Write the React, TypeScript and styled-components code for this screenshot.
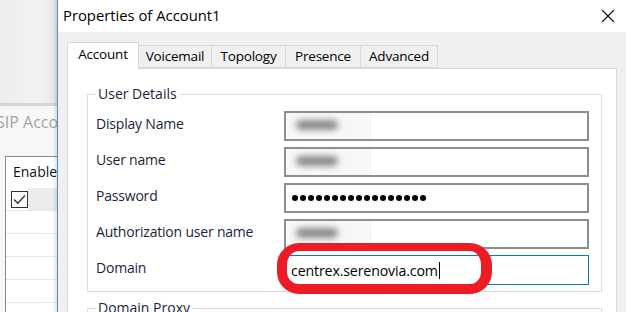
import React from 'react'
import styled, { createGlobalStyle } from 'styled-components'

const GlobalStyle = createGlobalStyle`
    html, body {
        margin: 0;
        padding: 0;
        width: 626px;
        height: 312px;
        overflow: hidden;
        background: #f0f0f0;
    }
    body {
        font-family: "Open Sans", "Noto Sans", "Liberation Sans", sans-serif;
        color: #000;
    }
`

const Screen = styled.div`
    display: flex;
    width: 626px;
    height: 312px;
    overflow: hidden;
`

/* window behind the dialog */
const BackWindow = styled.div`
    width: 57px;
    flex-shrink: 0;
    display: flex;
    flex-direction: column;
    background: #f7f7f7;
    overflow: hidden;
`

const BackHeader = styled.div`
    height: 103px;
    flex-shrink: 0;
    background: linear-gradient(to right, #ededed 0%, #f3f3f3 70%, #e4e4e4 100%);
    border-bottom: 3px solid #d6d6d6;
`

const BackTitle = styled.div`
    margin: 5px 0 0 -4px;
    height: 28px;
    font-size: 16px;
    color: #a3a3a3;
    white-space: nowrap;
`

const BackTable = styled.div`
    margin: 17px 0 0 5px;
    flex: 1;
    background: #fff;
    border: 1px solid #8a8a8a;
    border-right: none;
    border-bottom: none;
`

const BackHead = styled.div`
    height: 31px;
    padding: 5px 0 0 7px;
    box-sizing: border-box;
    font-size: 14px;
    color: #111;
    white-space: nowrap;
`

const BackRow = styled.div<{ $selected?: boolean }>`
    height: 22px;
    display: flex;
    align-items: center;
    border-bottom: 1px solid #e6e6e6;
    background: ${p => (p.$selected ? 'linear-gradient(to right, #fff 0 22px, #ececec 22px)' : '#fff')};
`

const CheckBox = styled.span`
    width: 17px;
    height: 17px;
    margin-left: 5px;
    box-sizing: border-box;
    border: 1.5px solid #333;
    display: flex;
    align-items: center;
    justify-content: center;
    background: #fff;
`

/* the dialog */
const Dialog = styled.div`
    flex: 1;
    display: flex;
    flex-direction: column;
    border-left: 1px solid #4a90d9;
    background: #f0f0f0;
    box-shadow: -2px 0 3px rgba(0, 0, 0, 0.12);
`

const TitleBar = styled.div`
    height: 32px;
    flex-shrink: 0;
    display: flex;
    align-items: center;
    justify-content: space-between;
    padding: 0 11px 0 5px;
    background: #fff;
`

const Title = styled.div`
    font-size: 14.8px;
    color: #000;
    margin-top: -2px;
`

const Body = styled.div`
    flex: 1;
    display: flex;
    flex-direction: column;
    padding: 10px 9px 0 9px;
`

const TabRow = styled.div`
    display: flex;
    align-items: flex-end;
    height: 26px;
    flex-shrink: 0;
`

const Tab = styled.div<{ $active?: boolean; $w: number }>`
    position: relative;
    box-sizing: border-box;
    width: ${p => p.$w}px;
    height: ${p => (p.$active ? 27 : 23)}px;
    margin-bottom: ${p => (p.$active ? -1 : 0)}px;
    margin-left: ${p => (p.$active ? 0 : -1)}px;
    z-index: ${p => (p.$active ? 1 : 0)};
    display: flex;
    align-items: center;
    justify-content: center;
    padding-bottom: ${p => (p.$active ? 4 : 1)}px;
    font-size: 13.5px;
    letter-spacing: -0.2px;
    background: ${p => (p.$active ? '#fff' : '#f0f0f0')};
    border: 1px solid #d9d9d9;
    border-bottom: ${p => (p.$active ? 'none' : '1px solid #d9d9d9')};
`

const Panel = styled.div`
    flex: 1;
    background: #fff;
    border: 1px solid #d9d9d9;
    padding: 16px 14px 0 19px;
    display: flex;
    flex-direction: column;
`

const Group = styled.fieldset<{ $gap?: number }>`
    margin: ${p => p.$gap ?? 0}px 0 0 0;
    padding: 0 12px 6px 8px;
    border: 1px solid #dcdcdc;
    min-width: 0;
`

const Legend = styled.legend`
    padding: 0 2px;
    font-size: 14px;
    line-height: 18px;
    color: #1a1f3a;
`

const Rows = styled.div`
    display: grid;
    grid-template-columns: 188px 1fr;
    row-gap: 6px;
    margin-top: 8px;
`

const Label = styled.div`
    font-size: 14px;
    letter-spacing: -0.2px;
    color: #1a1f3a;
    display: flex;
    align-items: center;
    padding-bottom: 6px;
`

const FieldWrap = styled.div`
    position: relative;
`

const Field = styled.div<{ $focused?: boolean }>`
    height: 30px;
    box-sizing: border-box;
    display: flex;
    align-items: center;
    background: #fff;
    border: ${p => (p.$focused ? '1px solid #0078d7' : '2px solid #8e8e8e')};
    padding-left: ${p => (p.$focused ? 6 : 1)}px;
`

const Patch = styled.span`
    width: 85px;
    height: 100%;
    display: flex;
    align-items: center;
    background: #f7f7f7;
`

const Smudge = styled.span`
    width: 42px;
    height: 10px;
    margin: 0 0 3px 9px;
    border-radius: 6px;
    background: #8a8a8a;
    filter: blur(3px);
`

const Dots = styled.span`
    display: flex;
    gap: 2px;
    margin-left: 5px;
`

const Dot = styled.span`
    width: 6px;
    height: 6px;
    border-radius: 50%;
    background: #000;
`

const Value = styled.span`
    font-size: 14.2px;
    color: #000;
    letter-spacing: -0.15px;
`

const Caret = styled.span`
    width: 1.5px;
    height: 17px;
    margin-left: 1px;
    background: #000;
`

const Annotation = styled.div`
    position: absolute;
    left: -7px;
    top: -12px;
    width: 215px;
    height: 51px;
    box-sizing: border-box;
    border: solid #ed1c24;
    border-width: 8px 11px 10px 10px;
    border-radius: 22px;
    pointer-events: none;
`

const tabs = [
    { label: 'Account', w: 72 },
    { label: 'Voicemail', w: 74 },
    { label: 'Topology', w: 75 },
    { label: 'Presence', w: 76 },
    { label: 'Advanced', w: 78 },
]

const Redacted = () => (
    <Patch>
        <Smudge />
    </Patch>
)

const App: React.FC = () => {
    return (
        <>
            <GlobalStyle />
            <Screen>
                <BackWindow>
                    <BackHeader />
                    <BackTitle>SIP Accounts</BackTitle>
                    <BackTable>
                        <BackHead>Enabled</BackHead>
                        <BackRow $selected>
                            <CheckBox>
                                <svg width="13" height="11" viewBox="0 0 13 11">
                                    <path d="M1 5.5 L4.8 9.2 L12 1.5" fill="none" stroke="#333" strokeWidth="1.3" />
                                </svg>
                            </CheckBox>
                        </BackRow>
                        <BackRow />
                        <BackRow />
                        <BackRow />
                        <BackRow />
                    </BackTable>
                </BackWindow>

                <Dialog>
                    <TitleBar>
                        <Title>Properties of Account1</Title>
                        <svg width="14" height="14" viewBox="0 0 14 14">
                            <path d="M1 1 L13 13 M13 1 L1 13" stroke="#111" strokeWidth="1.2" />
                        </svg>
                    </TitleBar>
                    <Body>
                        <TabRow>
                            {tabs.map((t, i) => (
                                <Tab key={t.label} $w={t.w} $active={i === 0}>
                                    {t.label}
                                </Tab>
                            ))}
                        </TabRow>
                        <Panel>
                            <Group>
                                <Legend>User Details</Legend>
                                <Rows>
                                    <Label>Display Name</Label>
                                    <Field><Redacted /></Field>
                                    <Label>User name</Label>
                                    <Field><Redacted /></Field>
                                    <Label>Password</Label>
                                    <Field>
                                        <Dots>
                                            {Array.from({ length: 17 }).map((_, i) => <Dot key={i} />)}
                                        </Dots>
                                    </Field>
                                    <Label>Authorization user name</Label>
                                    <Field><Redacted /></Field>
                                    <Label>Domain</Label>
                                    <FieldWrap>
                                        <Field $focused>
                                            <Value>centrex.serenovia.com</Value>
                                            <Caret />
                                        </Field>
                                        <Annotation />
                                    </FieldWrap>
                                </Rows>
                            </Group>
                            <Group $gap={7}>
                                <Legend>Domain Proxy</Legend>
                            </Group>
                        </Panel>
                    </Body>
                </Dialog>
            </Screen>
        </>
    )
}

export default App
